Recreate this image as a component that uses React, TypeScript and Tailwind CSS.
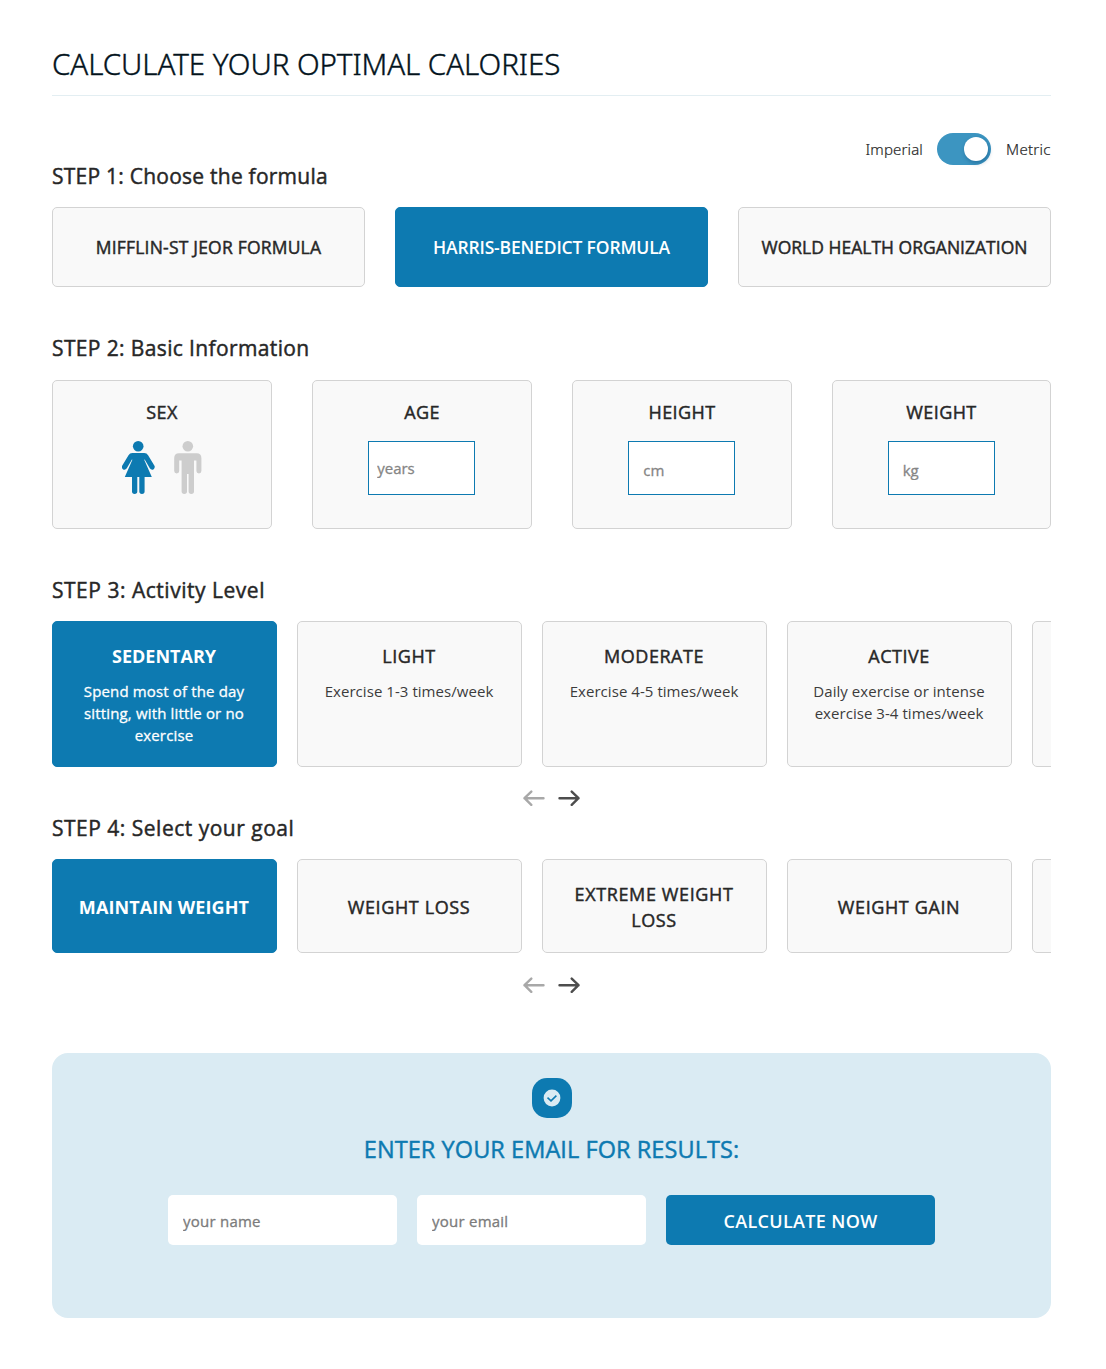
import { useState } from 'react';
import type { ReactNode } from 'react';
import { clsx } from 'clsx';

const formulas = [
  { name: 'MIFFLIN-ST JEOR FORMULA', tracking: 'tracking-[0.2px]' },
  { name: 'HARRIS-BENEDICT FORMULA', tracking: 'tracking-[-0.16px]' },
  { name: 'WORLD HEALTH ORGANIZATION', tracking: 'tracking-[0.02px]' },
];

const activities = [
  { name: 'SEDENTARY', text: 'Spend most of the day sitting, with little or no exercise' },
  { name: 'LIGHT', text: 'Exercise 1-3 times/week' },
  { name: 'MODERATE', text: 'Exercise 4-5 times/week' },
  { name: 'ACTIVE', text: 'Daily exercise or intense exercise 3-4 times/week' },
  { name: '', text: '' },
];

const goals = ['MAINTAIN WEIGHT', 'WEIGHT LOSS', 'EXTREME WEIGHT LOSS', 'WEIGHT GAIN', ''];

const selected = 'border-[#0d7ab1] bg-[#0d7ab1] text-white';
const idle = 'border-[#d3d3d3] bg-[#f9f9f9] text-[#272727]';
// Thickens the regular face to a medium weight.
const medium = 'font-medium [-webkit-text-stroke:0.45px_currentColor]';

function StepTitle({ className, children }: { className: string; children: ReactNode }) {
  return (
    <h2 className={clsx('text-[21px] leading-[30px] whitespace-nowrap text-[#272727]', medium, className)}>
      {children}
    </h2>
  );
}

function Woman() {
  return (
    <svg viewBox="0 0 33 53" className="h-[53px] w-[33px]" fill="currentColor">
      <circle cx="16.2" cy="5.3" r="5.3" />
      <path d="M10.3 12.1H22.3Q24.8 12.1 26.1 14.3L32.6 24.9Q33.2 27.2 31.4 28.4Q29.2 29.2 27.8 27.3L22.7 18.4L22.2 18.8L29.8 36H22.6V50.6Q22.6 53 20 53Q17.3 53 17.3 50.6V36H15.3V50.6Q15.3 53 12.6 53Q10 53 10 50.6V36H2.8L10.4 18.8L9.9 18.4L4.8 27.3Q3.4 29.2 1.2 28.4Q-.6 27.2 0 24.9L6.5 14.3Q7.8 12.1 10.3 12.1Z" />
    </svg>
  );
}

function Man() {
  return (
    <svg viewBox="0 0 28 53" className="h-[53px] w-7" fill="currentColor">
      <circle cx="13.8" cy="5.3" r="5.3" />
      <path d="M5 12.3H22.6Q27.4 12.3 27.4 17.3V30Q27.4 32.4 24.9 32.4Q22.4 32.4 22.4 30V19.5H20V50.6Q20 53 17.3 53Q14.6 53 14.6 50.6V33H13V50.6Q13 53 10.3 53Q7.6 53 7.6 50.6V19.5H5.2V30Q5.2 32.4 2.7 32.4Q.2 32.4.2 30V17.3Q.2 12.3 5 12.3Z" />
    </svg>
  );
}

function Arrow({ left = false }: { left?: boolean }) {
  return (
    <svg
      viewBox="0 0 22 16"
      className={clsx('h-4 w-[22px]', left ? '-scale-x-100 text-[#a8a8a8]' : 'text-[#4d4d4d]')}
      fill="none"
      stroke="currentColor"
      strokeWidth="2.4"
      strokeLinecap="round"
      strokeLinejoin="round"
    >
      <path d="M1.5 8.2H20.5M13.7 1.6L20.5 8.2L13.7 14.8" />
    </svg>
  );
}

function Pager() {
  return (
    <div className="flex h-4 justify-center gap-[13px]">
      <button aria-label="Previous"><Arrow left /></button>
      <button aria-label="Next"><Arrow /></button>
    </div>
  );
}

function InfoCard({ title, children }: { title: string; children: ReactNode }) {
  return (
    <div className="flex h-[149px] flex-col items-center rounded-[5px] border border-[#d3d3d3] bg-[#f9f9f9] pt-[18px]">
      <h3 className={clsx('text-[18px] leading-[26px] tracking-[0.4px] text-[#272727]', medium)}>{title}</h3>
      {children}
    </div>
  );
}

function InfoInput({ placeholder, className }: { placeholder: string; className: string }) {
  return (
    <input
      placeholder={placeholder}
      className={clsx(
        'mt-4 mr-[0.6px] h-[54px] w-[107px] border border-[#0d7ab1] bg-white text-[15px] outline-none [-webkit-text-stroke:0.3px_#858585] placeholder:text-[#858585]',
        className,
      )}
    />
  );
}

function EmailInput({ placeholder }: { placeholder: string }) {
  return (
    <input
      placeholder={placeholder}
      className="h-[50px] w-[229px] rounded-[5px] bg-white px-[15px] pt-[2px] pb-px text-[15px] tracking-[0.24px] outline-none [-webkit-text-stroke:0.3px_#7b7b7b] placeholder:text-[#7b7b7b]"
    />
  );
}

export default function App() {
  const [formula, setFormula] = useState(1);
  const [activity, setActivity] = useState(0);
  const [goal, setGoal] = useState(0);
  const [female, setFemale] = useState(true);

  return (
    <main className="h-[1369px] w-[1106px] bg-white pr-[55px] pl-[52px] font-['Open_Sans',sans-serif]">
      <header className="flex h-24 items-end border-b border-[#e3eef2] pb-[11px]">
        <h1 className="font-['Noto_Sans',sans-serif] text-[29.5px] leading-10 font-light tracking-[-0.06px] whitespace-nowrap text-[#03131c] [-webkit-text-stroke:0.4px_currentColor]">
          CALCULATE YOUR OPTIMAL CALORIES
        </h1>
      </header>

      <section className="h-[191px]">
        <div className="flex h-[111px] items-start justify-between">
          <StepTitle className="mt-[65px] tracking-[0.24px]">STEP 1: Choose the formula</StepTitle>
          <div className="mt-[37px] flex items-center font-['Noto_Sans',sans-serif] text-[15px] font-light tracking-[0.15px] text-[#272727] [-webkit-text-stroke:0.2px_currentColor]">
            <span>Imperial</span>
            <button aria-label="Units" className="mr-[15px] ml-[14px] flex h-8 w-[54px] items-center justify-end rounded-full bg-[#3c95c1] pr-[3px]">
              <span className="size-6 rounded-full bg-white shadow-[1px_2px_4px_rgba(0,60,110,0.4)]" />
            </button>
            <span className="-mr-px w-[46px] tracking-[0.3px]">Metric</span>
          </div>
        </div>
        <div className="grid grid-cols-3 gap-[30px]">
          {formulas.map((f, i) => (
            <button
              key={f.name}
              onClick={() => setFormula(i)}
              className={clsx(
                'h-20 rounded-[5px] border text-[17.5px] whitespace-nowrap',
                f.tracking,
                i === formula ? selected : idle,
                i === formula ? 'font-semibold' : medium,
              )}
            >
              {f.name}
            </button>
          ))}
        </div>
      </section>

      <section className="pt-[46px]">
        <StepTitle className="tracking-[0.37px]">STEP 2: Basic Information</StepTitle>
        <div className="mt-[17px] grid grid-cols-[220px_220px_220px_219px] gap-10">
          <InfoCard title="SEX">
            <div className="mt-4 flex justify-center gap-[19px]">
              <button aria-label="Female" onClick={() => setFemale(true)} className={female ? 'text-[#0d7ab1]' : 'text-[#cdcdcd]'}>
                <Woman />
              </button>
              <button aria-label="Male" onClick={() => setFemale(false)} className={female ? 'text-[#cdcdcd]' : 'text-[#0d7ab1]'}>
                <Man />
              </button>
            </div>
          </InfoCard>
          <InfoCard title="AGE"><InfoInput placeholder="years" className="px-2" /></InfoCard>
          <InfoCard title="HEIGHT"><InfoInput placeholder="cm" className="px-[14px] pt-1" /></InfoCard>
          <InfoCard title="WEIGHT"><InfoInput placeholder="kg" className="px-[14px] pt-1" /></InfoCard>
        </div>
      </section>

      <section className="pt-[46px]">
        <StepTitle className="tracking-[0.52px]">STEP 3: Activity Level</StepTitle>
        <div className="mt-4 mb-[23px] flex gap-5 overflow-hidden">
          {activities.map((a, i) => (
            <button
              key={i}
              onClick={() => setActivity(i)}
              className={clsx(
                'flex h-[146px] w-[225px] shrink-0 flex-col items-center rounded-[5px] border pt-[21px] pr-[21px] pl-5',
                i === activity ? selected : idle,
              )}
            >
              <span className={clsx('text-[18px] leading-[26px]', i === activity ? 'font-bold' : 'tracking-[0.52px]', i !== activity && medium)}>
                {a.name}
              </span>
              <span
                className={clsx(
                  'mt-[11px] text-[15px] leading-[22px]',
                  i === activity ? 'tracking-[0.15px] [-webkit-text-stroke:0.3px_currentColor]' : 'tracking-[0.05px] text-[#3c3c3c]',
                )}
              >
                {a.text}
              </span>
            </button>
          ))}
        </div>
        <Pager />
      </section>

      <section className="pt-[7px]">
        <StepTitle className="tracking-[0.5px]">STEP 4: Select your goal</StepTitle>
        <div className="mt-4 mb-6 flex gap-5 overflow-hidden">
          {goals.map((g, i) => (
            <button
              key={i}
              onClick={() => setGoal(i)}
              className={clsx(
                'flex h-[94px] w-[225px] shrink-0 items-center justify-center rounded-[5px] border pt-[2px] pr-[17px] pl-4 text-[18px] leading-[26px]',
                i === goal ? selected : idle,
                i === goal ? 'font-bold tracking-[0.1px]' : 'tracking-[0.62px]',
                i !== goal && medium,
              )}
            >
              {g}
            </button>
          ))}
        </div>
        <Pager />
      </section>

      <section className="mt-[60px] flex h-[265px] flex-col items-center rounded-[16px] bg-[#daebf3] pt-[25px]">
        <div className="flex size-10 items-center justify-center rounded-[15px] bg-[#0d7ab1]">
          <svg viewBox="0 0 18 18" className="size-[18px]" fill="none">
            <circle cx="9" cy="9" r="8.4" fill="#daebf3" />
            <path d="M4.5 8.6L8 11.9L13.4 6.6" stroke="#0d7ab1" strokeWidth="1.5" />
          </svg>
        </div>
        <h2 className={clsx('mt-[15px] text-[23.5px] leading-8 tracking-[0.07px] whitespace-nowrap text-[#0d7ab1]', medium)}>
          ENTER YOUR EMAIL FOR RESULTS:
        </h2>
        <form className="mt-[30px] flex gap-5" onSubmit={(e) => e.preventDefault()}>
          <EmailInput placeholder="your name" />
          <EmailInput placeholder="your email" />
          <button className="h-[50px] w-[269px] rounded-[5px] bg-[#0d7ab1] pt-[2px] text-[18px] font-semibold tracking-[0.33px] text-white">
            CALCULATE NOW
          </button>
        </form>
      </section>
    </main>
  );
}
